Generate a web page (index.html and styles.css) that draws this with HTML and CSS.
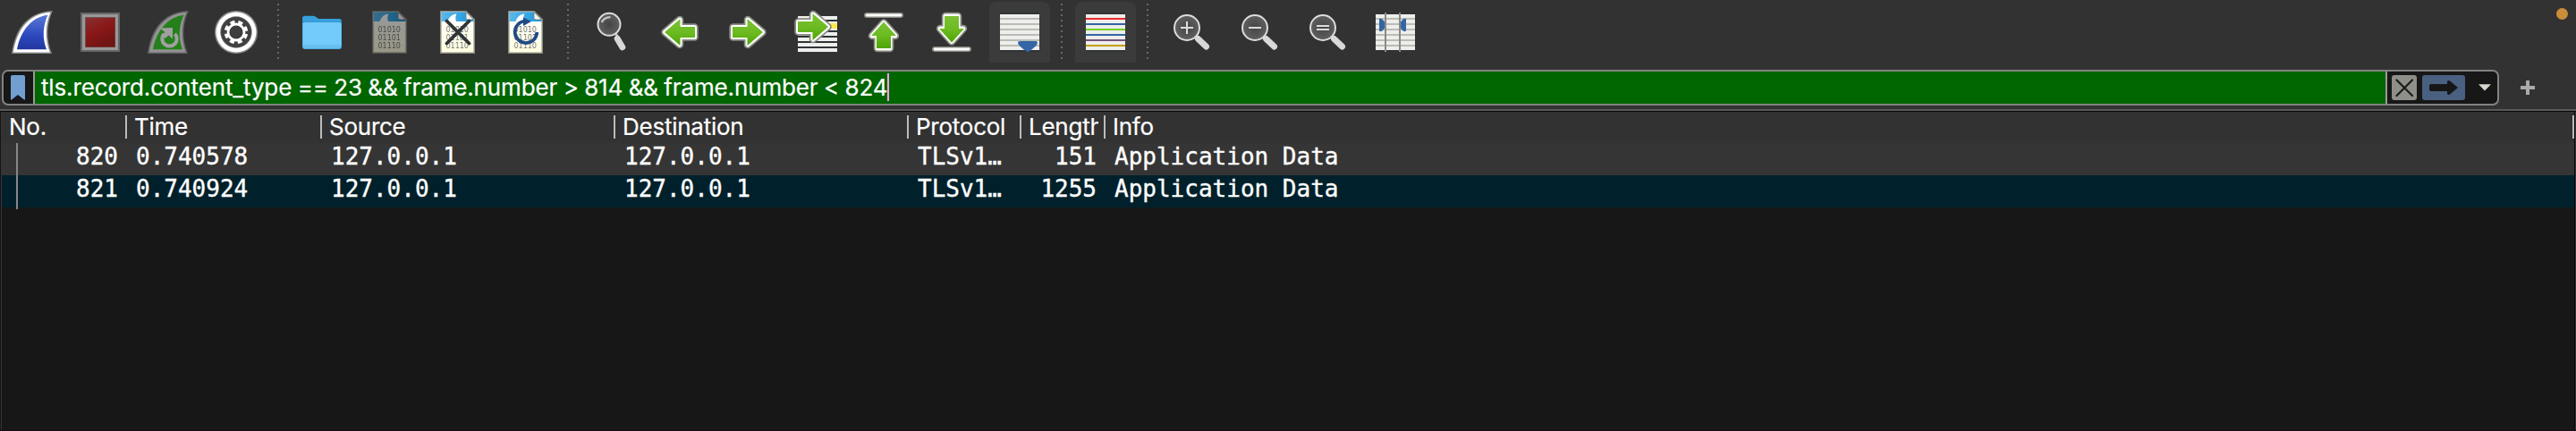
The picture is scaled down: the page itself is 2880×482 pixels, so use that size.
FILE: index.html
```html
<!DOCTYPE html>
<html lang="en">
<head>
<meta charset="utf-8">
<title>Packet list</title>
<link rel="stylesheet" href="styles.css">
</head>
<body>
<svg class="defs" width="0" height="0">
  <defs>
    <linearGradient id="blue" x1="0" y1="0" x2="0" y2="1"><stop offset="0" stop-color="#5b78d8"/><stop offset=".6" stop-color="#2b48bd"/><stop offset="1" stop-color="#2238a0"/></linearGradient>
    <linearGradient id="red" x1="0" y1="0" x2=".5" y2="1"><stop offset="0" stop-color="#883030"/><stop offset=".5" stop-color="#8a1818"/><stop offset="1" stop-color="#701414"/></linearGradient>
    <linearGradient id="green" x1="0" y1="0" x2="0" y2="1"><stop offset="0" stop-color="#7cc234"/><stop offset=".5" stop-color="#6cbb22"/><stop offset="1" stop-color="#4ea406"/></linearGradient>
    <linearGradient id="sky" x1="0" y1="0" x2="1" y2="0"><stop offset="0" stop-color="#5bb8ea"/><stop offset="1" stop-color="#1a97dc"/></linearGradient>
    <linearGradient id="paper" x1="0" y1="0" x2="0" y2="1"><stop offset="0" stop-color="#fff"/><stop offset="1" stop-color="#fffee0"/></linearGradient>
    <radialGradient id="lens"><stop offset="0" stop-color="#454545"/><stop offset="1" stop-color="#606060"/></radialGradient>
    <symbol id="doc" viewBox="0 0 48 48">
      <path d="M4 0H33.5L43 9.500V48H4Z" fill="#888a80"/>
      <path d="M5.500 1.500H33L41.500 10V46.500H5.500Z" fill="url(#paper)"/>
      <path d="M5.500 1.500H33L41.500 10V12H5.500Z" fill="url(#sky)"/>
      <path d="M12.500 12C14 7 17.500 4 22.500 3.500C21 6 21 9 22 12Z" fill="#fff"/>
      <path d="M33 1.500L41.500 10H35Q33 10 33 8Z" fill="#f4f4ee" stroke="#777" stroke-width=".8"/>
      <g class="bits"><text x="10.500" y="23.600">01010</text><text x="10.500" y="32.600">01101</text><text x="10.500" y="41.600">01110</text></g>
    </symbol>
    <symbol id="arrow" viewBox="0 0 48 48">
      <g stroke-linejoin="round"><path d="M7.500 18.500H24V10L40.500 24L24 38V29.500H7.500Z" fill="none" stroke="#888a80" stroke-width="8.500"/>
      <path d="M7.500 18.500H24V10L40.500 24L24 38V29.500H7.500Z" fill="url(#green)" stroke="#fff" stroke-width="5"/>
      <path d="M7 18H23.500V9L41 24L23.500 39V30H7Z" fill="url(#green)"/></g>
    </symbol>
    <symbol id="mag" viewBox="0 0 48 48">
      <path d="M31.500 31.500L40.500 40" stroke="#d8d8d8" stroke-width="7" stroke-linecap="round"/>
      <circle cx="19" cy="19" r="14" fill="url(#lens)" stroke="#dcdcdc" stroke-width="2"/>
    </symbol>
  </defs>
</svg>

<main class="window">
  <header class="toolbar">
    <button class="tool"><svg viewBox="0 0 48 48"><path d="M1 48C5 21 17 2 46.800 0C40.500 14 39 31 46 48Z" fill="#8a8a8a"/><path d="M2.800 46.500C7 21 20 3.500 44.500 1.800C38.800 15 38 31 43.700 46.500Z" fill="#fff"/><path d="M7 43.300C11 23 23 7 41.500 4.800C36 17 35 30 40 43.300Z" fill="url(#blue)"/></svg></button>
    <button class="tool"><svg viewBox="0 0 48 48"><path d="M2 2H46V46H2Z" fill="#666"/><path d="M4 4H44V44H4Z" fill="#989898"/><path d="M7 7H41V41H7Z" fill="#6e5555"/><path d="M8 8H40.500V40.500H8Z" fill="url(#red)"/></svg></button>
    <button class="tool"><svg viewBox="0 0 48 48"><path d="M1 48C5 21 17 2 46.800 0C40.500 14 39 31 46 48Z" fill="#626262"/><path d="M2.800 46.500C7 21 20 3.500 44.500 1.800C38.800 15 38 31 43.700 46.500Z" fill="#939393"/><path d="M7 43.300C11 23 23 7 41.500 4.800C36 17 35 30 40 43.300Z" fill="#25801b"/><path d="M19.500 25.800A8.200 8.200 0 1 0 31.500 25.800" fill="none" stroke="#a0a0a0" stroke-width="4"/><path d="M15 19.500L29 19V31.500L24.500 27.500L20.500 31L17.500 27.500L20.500 24Z" fill="#a0a0a0"/></svg></button>
    <button class="tool"><svg viewBox="0 0 48 48"><circle cx="24" cy="24" r="24" fill="#8c8c8c"/><circle cx="24" cy="24" r="22.500" fill="#fff"/><circle cx="24" cy="24" r="17.700" fill="#777"/><circle cx="24" cy="24" r="17" fill="#414141"/><circle cx="24" cy="24" r="11" fill="none" stroke="#fff" stroke-width="4.500" stroke-dasharray="4.800 3.839" stroke-dashoffset="-2"/><circle cx="24" cy="24" r="9" fill="#3d3d3d" stroke="#fff" stroke-width="2.800"/></svg></button>
    <span class="sep"></span>
    <button class="tool"><svg viewBox="0 0 48 48"><path d="M2 10V9Q2 5.800 5 5.800H14Q16 5.800 18 7.500L20 9H43Q46 9 46 12V20H2Z" fill="#38a0dc"/><path d="M2 12H46V16H2Z" fill="#1684c6"/><path d="M2 14.500Q2 12.500 4.500 12.500H43.500Q46 12.500 46 14.500V40Q46 43 43 43H5Q2 43 2 40Z" fill="#4fade0"/><path d="M2.700 14Q3 13 5 13H43Q45.500 13 45.500 15V39Q45 41.500 43 41.500H5Q2.700 41.500 2.700 39Z" fill="#73cbfb"/><path d="M3 38H45V39Q45 41.500 43 41.500H5Q3 41.500 3 39Z" fill="#66c0f0"/></svg></button>
    <button class="tool disabled"><svg viewBox="0 0 48 48"><use href="#doc"/></svg></button>
    <button class="tool"><svg viewBox="0 0 48 48"><use href="#doc"/><path d="M11.500 11.500L36.500 36.500M36.500 11.500L11.500 36.500" stroke="#2e3436" stroke-width="3.800" stroke-linecap="round"/></svg></button>
    <button class="tool"><svg viewBox="0 0 48 48"><use href="#doc"/><path d="M23 11.500A12.300 12.300 0 1 0 36.300 24" fill="none" stroke="#204a87" stroke-width="3.700"/><path d="M21 7.500L30 12L21 17Z" fill="#204a87"/></svg></button>
    <span class="sep"></span>
    <button class="tool"><svg viewBox="0 0 48 48"><path d="M28 25L31 30" stroke="#bbb" stroke-width="3"/><path d="M30.200 31.200L35.800 40.800" stroke="#d8d8d8" stroke-width="7" stroke-linecap="round"/><circle cx="21" cy="15.300" r="12.500" fill="url(#lens)" stroke="#dcdcdc" stroke-width="2"/><path d="M12.800 13Q15 7.500 22.500 7.200" fill="none" stroke="#c4c4c4" stroke-width="2.200"/></svg></button>
    <button class="tool"><svg viewBox="0 0 48 48"><use href="#arrow" transform="matrix(-1 0 0 1 48 0)"/></svg></button>
    <button class="tool"><svg viewBox="0 0 48 48"><use href="#arrow"/></svg></button>
    <button class="tool"><svg class="spill" viewBox="0 0 48 48"><path d="M4 6H48V46H4Z" fill="#eeeeec"/><path d="M4 11H48M4 17H48M4 23H48M4 29H48M4 35H48M4 41H48" stroke="#2e3436" stroke-width="2"/><path d="M30 14H48V20H30Z" fill="#fce94f"/><use href="#arrow" x="-3" y="-6" width="48" height="48"/></svg></button>
    <button class="tool"><svg viewBox="0 0 48 48"><path d="M5 5H43" stroke="#888a80" stroke-width="6" stroke-linecap="round"/><path d="M5 5H43" stroke="#fff" stroke-width="2.800" stroke-linecap="round"/><g stroke-linejoin="round"><path d="M24 13.500L37 28H31V42H17V28H11Z" fill="none" stroke="#888a80" stroke-width="8.500"/><path d="M24 13.500L37 28H31V42H17V28H11Z" fill="url(#green)" stroke="#fff" stroke-width="5"/><path d="M24 12.500L38 28H32V42H16V28H10Z" fill="url(#green)"/></g></svg></button>
    <button class="tool"><svg viewBox="0 0 48 48"><path d="M5 43H43" stroke="#888a80" stroke-width="6" stroke-linecap="round"/><path d="M5 43H43" stroke="#fff" stroke-width="2.800" stroke-linecap="round"/><g stroke-linejoin="round"><path d="M24 34.500L37 20H31V6H17V20H11Z" fill="none" stroke="#888a80" stroke-width="8.500"/><path d="M24 34.500L37 20H31V6H17V20H11Z" fill="url(#green)" stroke="#fff" stroke-width="5"/><path d="M24 35.500L38 20H32V6H16V20H10Z" fill="url(#green)"/></g></svg></button>
    <button class="tool checked"><svg viewBox="0 0 48 48"><path d="M2 2H46V46H2Z" fill="#2e3436"/><path d="M2 4H46V44H2Z" fill="#eeeeec"/><path d="M2 9H46M2 15H46M2 21H46M2 27H46M2 33H46M2 39H46" stroke="#babdb6" stroke-width="2"/><path d="M24 34H42Q44 34 44 36Q43.500 39 35 45.300Q33 46.500 31 45.300Q22.500 39 22 36Q22 34 24 34Z" fill="#3465a4"/></svg></button>
    <span class="sep"></span>
    <button class="tool checked"><svg viewBox="0 0 48 48"><path d="M2 2H46V46H2Z" fill="#2e3436"/><path d="M2 4H46V44H2Z" fill="#eeeeec"/><g stroke-width="2"><path d="M2 9H46" stroke="#ef2929"/><path d="M2 15H46M2 27H46" stroke="#3465a4"/><path d="M2 21H46" stroke="#73d216"/><path d="M2 33H46" stroke="#75507b"/><path d="M2 39H46" stroke="#c4a000"/></g></svg></button>
    <span class="sep"></span>
    <button class="tool"><svg viewBox="0 0 48 48"><use href="#mag"/><path d="M12 19H26M19 12V26" stroke="#dcdcdc" stroke-width="2"/></svg></button>
    <button class="tool"><svg viewBox="0 0 48 48"><use href="#mag"/><path d="M12 19H26" stroke="#dcdcdc" stroke-width="2"/></svg></button>
    <button class="tool"><svg viewBox="0 0 48 48"><use href="#mag"/><path d="M12 17H26M12 21H26" stroke="#dcdcdc" stroke-width="2"/></svg></button>
    <button class="tool"><svg viewBox="0 0 48 48"><path d="M2 4H46V44H2Z" fill="#eeeeec"/><path d="M2 9H46M2 15H46M2 21H46M2 27H46M2 33H46M2 39H46" stroke="#babdb6" stroke-width="2"/><path d="M6 9Q8 8 10 10L14 15V17L10 22Q8 24 6 22.500ZM36 9Q34 8 32 10L28 15V17L32 22Q34 24 36 22.500Z" fill="#3465a4"/><path d="M13 2V46M29 2V46" stroke="#888a85" stroke-width="2"/></svg></button>
    <span class="indicator"></span>
  </header>

  <section class="filter-row">
    <div class="filter">
      <span class="bookmark"><svg width="16" height="28" viewBox="0 0 16 28"><path d="M0 2Q0 0 2 0H14Q16 0 16 2V27.500H15L8 22L1 27.500H0Z" fill="#729fcf"/></svg></span>
      <div class="expression"><span class="query">tls.record.content_type == 23 &amp;&amp; frame.number &gt; 814 &amp;&amp; frame.number &lt; 824</span><span class="caret"></span></div>
      <div class="actions">
        <svg width="28" height="28" viewBox="0 0 28 28"><rect width="28" height="28" rx="3" fill="#8d8f88"/><path d="M5.500 5.500L23 23M23 5.500L5.500 23" stroke="#1a1a1a" stroke-width="2.200" stroke-linecap="round"/></svg>
        <svg width="48" height="28" viewBox="0 0 48 28"><rect width="48" height="28" rx="3" fill="#4a6080"/><path d="M10 10H28V8Q28 5 31 6.500L40 14L31 21.500Q28 23 28 20V18H10Q8 18 8 16V12Q8 10 10 10Z" fill="#171717"/></svg>
        <svg class="drop" width="14" height="8" viewBox="0 0 14 8"><path d="M0 .3H14L7 7.500Z" fill="#d3d7cf"/></svg>
      </div>
    </div>
    <svg class="plus" width="16" height="16" viewBox="0 0 16 16"><path d="M0 8H16M8 0V16" stroke="#aaa" stroke-width="4"/></svg>
  </section>

  <section class="packets">
    <div class="row head"><span>No.</span><span>Time</span><span>Source</span><span>Destination</span><span>Protocol</span><span class="length"><span class="clip">Length</span></span><span>Info</span></div>
    <div class="row data"><span class="num">820</span><span>0.740578</span><span>127.0.0.1</span><span>127.0.0.1</span><span>TLSv1…</span><span class="num">151</span><span>Application Data</span></div>
    <div class="row data tls"><span class="num">821</span><span>0.740924</span><span>127.0.0.1</span><span>127.0.0.1</span><span>TLSv1…</span><span class="num">1255</span><span>Application Data</span></div>
    <div class="stream-end"></div>
  </section>
</main>
</body>
</html>
```

FILE: styles.css
```css
* { box-sizing: border-box; }
html, body { height: 482px; overflow: hidden; }
body { margin: 0; background: #323232; color: #fff; }
.defs { position: absolute; }
.bits { font: 8px "DejaVu Sans", sans-serif; fill: #777; }
.window { width: 2880px; height: 482px; display: flex; flex-direction: column; overflow: hidden; }

.toolbar { height: 78px; padding: 2px 9px 0 2px; display: flex; gap: 8px; align-items: flex-start; }
.tool { width: 68px; height: 68px; padding: 10px; border: 0; background: none; flex: none; }
.tool svg { display: block; width: 48px; height: 48px; }
.tool .spill { overflow: visible; }
.tool.checked { background: #3b3b3b; border-radius: 8px 8px 0 0; }
.tool.disabled svg { filter: brightness(.6); }
.sep { width: 12px; height: 64px; margin-top: 2px; flex: none; background: repeating-linear-gradient(to bottom, #686868 0 2px, transparent 2px 6px) 4px 0 / 2px 62px no-repeat; }
.indicator { width: 13px; height: 13px; margin: 7px 0 0 auto; border-radius: 50%; background: #cb8d39; }

.filter-row { height: 44px; padding-left: 2px; display: flex; align-items: flex-start; }
.filter { width: 2792px; height: 40px; border: 2px solid #828282; border-radius: 7px; background: #171717; display: flex; overflow: hidden; }
.bookmark { width: 35px; padding: 4px 0 0 8px; border-right: 2px solid #999; flex: none; }
.bookmark svg { display: block; }
.expression { width: 2628px; background: #006600; display: flex; padding-left: 7px; }
.query { font: 26px/35px Inter, sans-serif; letter-spacing: -.14px; word-spacing: -.7px; -webkit-text-stroke: .2px #fff; white-space: pre; }
.caret { width: 2px; height: 31px; margin-top: 2px; background: #ff9cf5; }
.actions { flex: 1; border-left: 2px solid #999; padding: 4px 0 0 5px; display: flex; gap: 6px; }
.drop { margin: 10px 0 0 9px; }
.plus { margin: 12px 0 0 24px; }

.packets { flex: 1; border-top: 2px solid #5a5a5a; border-bottom: 1px solid #160c14; background: #171717; box-shadow: inset 0 1px #080808, inset 1px 0 #151515, inset 2px 0 #353535, inset -1px 0 #333, inset -2px 0 #080808; padding: 1px 2px 0; }
.row { display: grid; grid-template-columns: 140px 218px 328px 328px 126px 94px 1fr; height: 36px; white-space: pre; }
.head { height: 35px; background: #323232; font: 26px/32px Inter, sans-serif; letter-spacing: -.25px; -webkit-text-stroke: .2px #fff; }
.head > span { height: 26px; margin-top: 4px; line-height: 25px; padding-left: 8px; border-right: 2px solid #bbb; }
.head .clip { display: block; width: 78px; height: 30px; overflow: hidden; }
.data { background: #353535 linear-gradient(#888, #888) 16px 0 / 2px 100% no-repeat; font: 26px/30px "DejaVu Sans Mono", monospace; -webkit-text-stroke: .35px #fff; }
.data span { padding-left: 10px; }
.data .num { padding: 0 10px 0 0; text-align: right; }
.tls { background-color: #00212b; }
.stream-end { width: 2px; height: 2px; margin-left: 16px; background: #888; }
```
